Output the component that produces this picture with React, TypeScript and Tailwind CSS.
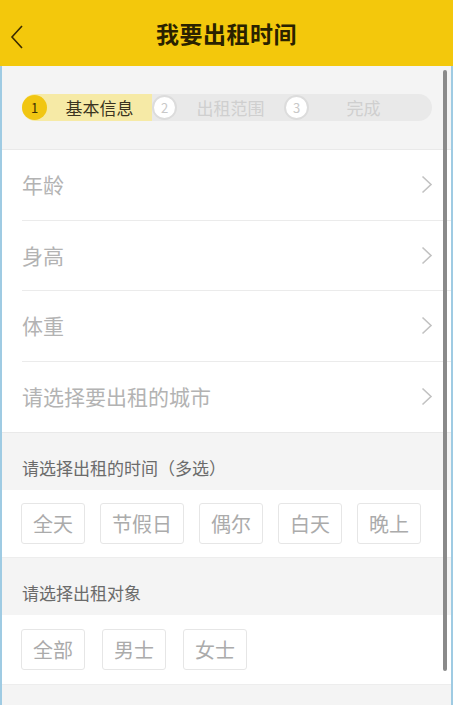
const rows = ['年龄', '身高', '体重', '请选择要出租的城市'];
const times = ['全天', '节假日', '偶尔', '白天', '晚上'];
const targets = ['全部', '男士', '女士'];

const font = { fontFamily: "'Noto Sans CJK SC', 'Noto Sans', sans-serif" };

function Tag({ label }: { label: string }) {
  return (
    <div className="h-[41px] px-[11px] flex items-center justify-center border border-[#e6e6e6] rounded-[3px] bg-white text-[20px] text-[#ababab]">
      {label}
    </div>
  );
}

export default function App() {
  return (
    <div className="w-[453px] h-[705px] overflow-hidden relative bg-[#f4f4f4]" style={font}>
      {/* header */}
      <div className="h-[66px] bg-[#f3c80c] relative flex items-center justify-center">
        <svg className="absolute left-[9px] top-[24px]" width="15" height="26" viewBox="0 0 15 26">
          <polyline points="13,2 3,13 13,24" fill="none" stroke="#3a2a00" strokeWidth="1.6" />
        </svg>
        <h1 className="text-[23px] font-bold text-[#2a2200] tracking-[0.5px]">我要出租时间</h1>
      </div>

      <div className="border-l-2 border-r-2 border-[#9fcbe3] h-[639px]">
        {/* steps */}
        <div className="pt-[28px] pb-[28px] pl-[20px] pr-[19px]">
          <div className="flex h-[27px]">
            <div className="w-[130px] flex items-center rounded-l-full bg-[#f6eaa6]">
              <div className="w-[25px] h-[25px] rounded-full bg-[#f1c612] flex items-center justify-center text-[13px] text-[#3a2e00]">1</div>
              <span className="flex-1 text-center text-[17px] text-[#3a3320]">基本信息</span>
            </div>
            <div className="w-[132px] flex items-center bg-[#e9e9e9]">
              <div className="w-[25px] h-[25px] rounded-full bg-white border-2 border-[#dcdcdc] flex items-center justify-center text-[13px] text-[#c8c8c8]">2</div>
              <span className="flex-1 text-center text-[17px] text-[#cfcfcf]">出租范围</span>
            </div>
            <div className="flex-1 flex items-center rounded-r-full bg-[#e9e9e9]">
              <div className="w-[25px] h-[25px] rounded-full bg-white border-2 border-[#dcdcdc] flex items-center justify-center text-[13px] text-[#c8c8c8]">3</div>
              <span className="flex-1 text-center pr-[14px] text-[17px] text-[#cfcfcf]">完成</span>
            </div>
          </div>
        </div>

        {/* list */}
        <div className="bg-white border-t border-b border-[#e9e9e9]">
          {rows.map((r, i) => (
            <div key={r} className="pl-[20px]">
              <div className={`h-[70.5px] flex items-center justify-between pr-[18px] ${i < rows.length - 1 ? 'border-b border-[#ebebeb]' : ''}`}>
                <span className="text-[21px] text-[#b3b3b3]">{r}</span>
                <svg width="12" height="19" viewBox="0 0 12 19">
                  <polyline points="1.5,1.5 10,9.5 1.5,17.5" fill="none" stroke="#c2c2c2" strokeWidth="1.6" />
                </svg>
              </div>
            </div>
          ))}
        </div>

        {/* time */}
        <div className="h-[57px] pl-[20px] pt-[23px] text-[17px] leading-[24px] text-[#6b6b6b]">请选择出租的时间（多选）</div>
        <div className="bg-white h-[68px] flex items-center gap-[15px] pl-[19px] border-b border-[#ededed]">
          {times.map((t) => (
            <Tag key={t} label={t} />
          ))}
        </div>

        {/* target */}
        <div className="h-[57px] pl-[20px] pt-[23px] text-[17px] leading-[24px] text-[#6b6b6b]">请选择出租对象</div>
        <div className="bg-white h-[70px] flex items-center gap-[17px] pl-[19px] border-b border-[#ededed]">
          {targets.map((t) => (
            <Tag key={t} label={t} />
          ))}
        </div>
      </div>

      {/* scrollbar */}
      <div className="absolute left-[443px] top-[70px] w-[4px] h-[601px] rounded-full bg-[#8a8a8a]" />
    </div>
  );
}
